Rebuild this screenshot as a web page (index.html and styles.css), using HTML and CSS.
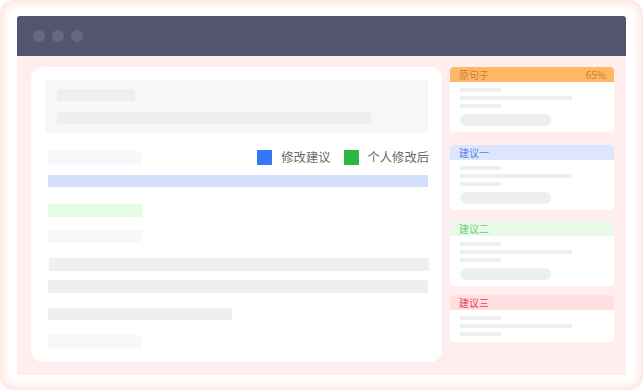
FILE: index.html
```html
<!DOCTYPE html>
<html lang="zh">
<head>
    <meta charset="UTF-8">
    <meta name="viewport" content="width=device-width, initial-scale=1.0">
    <title>修改建议</title>
    <link rel="stylesheet" href="styles.css">
</head>
<body>
    <div class="stage">
        <div class="window">
            <div class="titlebar">
                <span class="dot"></span>
                <span class="dot"></span>
                <span class="dot"></span>
            </div>
            <div class="content">
                <section class="editor">
                    <div class="quote">
                        <div class="bar bar-short"></div>
                        <div class="bar bar-long"></div>
                    </div>
                    <div class="legend-row">
                        <div class="line line-light line-short"></div>
                        <div class="legend">
                            <span class="swatch swatch-blue"></span>
                            <span class="legend-text">修改建议</span>
                            <span class="swatch swatch-green"></span>
                            <span class="legend-text">个人修改后</span>
                        </div>
                    </div>
                    <div class="line line-blue m11"></div>
                    <div class="line line-green line-short m17"></div>
                    <div class="line line-light line-short m13"></div>
                    <div class="line line-gray m15 shift"></div>
                    <div class="line line-gray m9"></div>
                    <div class="line line-gray line-mid m15"></div>
                    <div class="line line-light line-short m15"></div>
                </section>

                <aside class="sidebar">
                    <div class="card">
                        <div class="card-head head-orange"><span>原句子</span><span>65%</span></div>
                        <div class="card-body">
                            <div class="tiny tiny-short"></div>
                            <div class="tiny"></div>
                            <div class="tiny tiny-short"></div>
                            <div class="pill"></div>
                        </div>
                    </div>
                    <div class="card card-2">
                        <div class="card-head head-blue"><span>建议一</span></div>
                        <div class="card-body">
                            <div class="tiny tiny-short"></div>
                            <div class="tiny"></div>
                            <div class="tiny tiny-short"></div>
                            <div class="pill"></div>
                        </div>
                    </div>
                    <div class="card">
                        <div class="card-head head-green"><span>建议二</span></div>
                        <div class="card-body">
                            <div class="tiny tiny-short"></div>
                            <div class="tiny"></div>
                            <div class="tiny tiny-short"></div>
                            <div class="pill"></div>
                        </div>
                    </div>
                    <div class="card card-4">
                        <div class="card-head head-red"><span>建议三</span></div>
                        <div class="card-body">
                            <div class="tiny tiny-short"></div>
                            <div class="tiny"></div>
                            <div class="tiny tiny-short"></div>
                        </div>
                    </div>
                </aside>
            </div>
        </div>
    </div>
</body>
</html>
```

FILE: styles.css
```css
:root{
  --frame:#545470;
  --pink:#ffeeed;
  --gray:#eeeff1;
  --light:#f7f8f9;
}

*{
  box-sizing: border-box;
  margin: 0;
  padding: 0;
}

body{
  background: #fff;
  font-family: "Noto Sans CJK SC", "Noto Sans", sans-serif;
}

.stage{
  width: 643px;
  height: 390px;
  padding: 16px 17px 15px 17px;
  border-radius: 14px;
  box-shadow: inset 0 0 10px 3px #ffe1dd;
  background: #fff;
}

.window{
  display: flex;
  flex-direction: column;
  height: 359px;
  border-radius: 3px 3px 0 0;
  overflow: hidden;
}

.titlebar{
  display: flex;
  align-items: center;
  gap: 7px;
  height: 40px;
  padding-left: 16px;
  background: var(--frame);
}
.dot{
  width: 12px;
  height: 12px;
  border-radius: 50%;
  background: #676785;
}

.content{
  flex: 1;
  display: flex;
  gap: 8px;
  padding: 11px 12px 13px 14px;
  background: var(--pink);
}

/* left editor */
.editor{
  width: 411px;
  background: #fff;
  border-radius: 12px;
  padding: 13px 14px 0 17px;
}
.quote{
  height: 53px;
  margin-left: -3px;
  padding: 9px 12px;
  background: #f7f7f7;
}
.bar{
  height: 12px;
  background: var(--gray);
}
.bar-short{ width: 78px; }
.bar-long{ width: 314px; margin-top: 11px; }

.legend-row{
  display: flex;
  justify-content: space-between;
  align-items: center;
  height: 13px;
  margin-top: 18px;
}
.legend{
  display: flex;
  align-items: center;
  margin-right: -1px;
}
.swatch{
  width: 15px;
  height: 15px;
}
.swatch-blue{ background: #3478f6; }
.swatch-green{ background: #2bb843; margin-left: 13px; }
.legend-text{
  margin-left: 9px;
  font-size: 12.3px;
  color: #6a6a6a;
  line-height: 15px;
}

.line{
  height: 13px;
}
.line-short{ width: 94px; }
.line-mid{ width: 184px; height: 12px; }
.line-light{ background: var(--light); }
.line-gray{ background: var(--gray); }
.line-blue{ background: #d2e0fd; height: 12px; }
.line-green{ background: #e2fde4; }
.shift{ margin-left: 1px; margin-right: -1px; }

.m9{ margin-top: 9px; }
.m11{ margin-top: 11px; }
.m13{ margin-top: 13px; }
.m15{ margin-top: 15px; }
.m17{ margin-top: 17px; }

/* right suggestion cards */
.sidebar{
  width: 164px;
  display: flex;
  flex-direction: column;
  gap: 11px;
}
.card{
  background: #fff;
  border-radius: 4px;
  overflow: hidden;
}
.card-2{ margin-top: 2px; }
.card-4{ margin-top: -2px; }
.card-head{
  display: flex;
  justify-content: space-between;
  align-items: center;
  height: 15px;
  padding: 0 8px 0 9px;
  font-size: 10px;
}
.head-orange{ background: #ffb966; color: #c9802f; }
.head-blue{ background: #dde6fd; color: #5a7de6; }
.head-green{ background: #e8fbe8; color: #6fcf72; }
.head-red{ background: #ffdfe1; color: #e8414b; }

.card-body{
  display: flex;
  flex-direction: column;
  gap: 4px;
  padding: 6px 10px;
}
.tiny{
  width: 112px;
  height: 4px;
  background: var(--gray);
}
.tiny-short{ width: 41px; }
.pill{
  width: 91px;
  height: 12px;
  margin-top: 2px;
  border-radius: 6px;
  background: var(--gray);
}
```
